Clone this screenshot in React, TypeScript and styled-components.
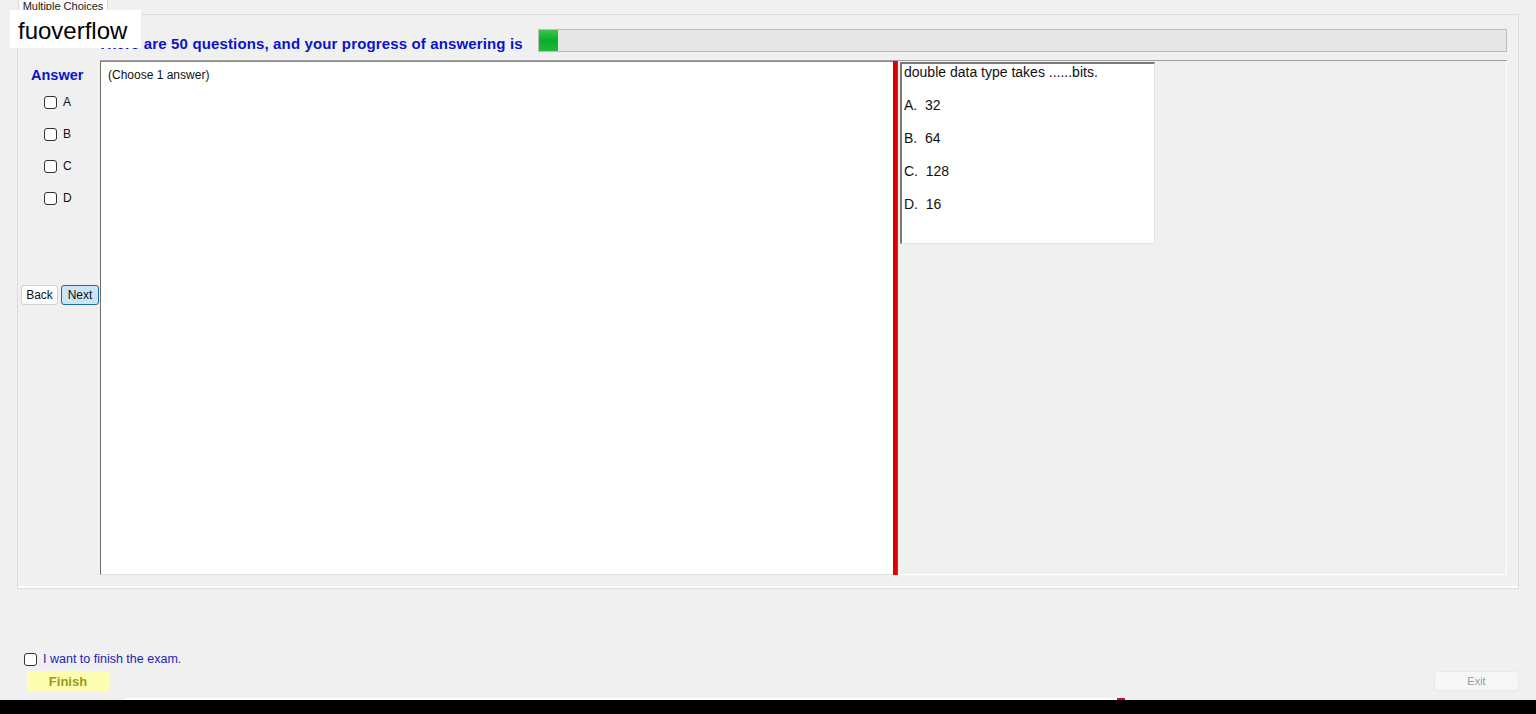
import styled, { createGlobalStyle } from "styled-components";

const GlobalStyle = createGlobalStyle`
  html, body {
    margin: 0;
    padding: 0;
    background: #f0f0f0;
    font-family: "Liberation Sans", Arial, sans-serif;
  }
  *, *::before, *::after {
    box-sizing: border-box;
  }
`;

const Screen = styled.div`
  position: relative;
  width: 1536px;
  height: 714px;
  overflow: hidden;
  display: flex;
  flex-direction: column;
  background: #f0f0f0;
`;

const Watermark = styled.div`
  position: absolute;
  left: 10px;
  top: 10px;
  width: 131px;
  height: 38px;
  padding-left: 8px;
  background: #ffffff;
  font-size: 24px;
  line-height: 42px;
  color: #000;
`;

const TabStrip = styled.div`
  height: 14px;
  padding-left: 18px;
  display: flex;
`;

const Tab = styled.div`
  width: 90px;
  height: 14px;
  border: 1px solid #d9d9d9;
  border-top: none;
  border-bottom: none;
  background: #fafafa;
  font-size: 11px;
  line-height: 12px;
  color: #222;
  text-align: center;
  overflow: hidden;
  white-space: nowrap;
`;

const TabPanel = styled.div`
  margin-left: 17px;
  width: 1502px;
  height: 575px;
  border: 1px solid #dcdcdc;
  box-shadow: inset 0 -2px 0 #ffffff;
  display: flex;
  flex-direction: column;
`;

const Header = styled.div`
  height: 45px;
  display: flex;
  align-items: flex-end;
  padding-left: 80px;
  padding-right: 11px;
`;

const HeaderText = styled.div`
  font-size: 15px;
  letter-spacing: 0.14px;
  font-weight: bold;
  color: #0a14c8;
  line-height: 16px;
  margin-bottom: 8px;
  white-space: nowrap;
`;

const Progress = styled.div`
  flex: 1;
  height: 23px;
  margin-left: 15px;
  margin-bottom: 8px;
  background: #e6e6e6;
  border: 1px solid #bcbcbc;
  display: flex;
`;

const ProgressFill = styled.div`
  height: 100%;
  background: linear-gradient(#3cc450, #06b025 50%, #22b83a);
`;

const Body = styled.div`
  height: 515px;
  display: flex;
`;

const LeftCol = styled.div`
  width: 82px;
  display: flex;
  flex-direction: column;
`;

const AnswerTitle = styled.div`
  margin: 7px 0 0 13px;
  font-size: 14.5px;
  font-weight: bold;
  color: #0a14c8;
  line-height: 16px;
`;

const Options = styled.div`
  margin-top: 3px;
  padding-left: 26px;
  display: flex;
  flex-direction: column;
`;

const OptionRow = styled.label`
  height: 32px;
  display: flex;
  align-items: center;
  gap: 6px;
  font-size: 12px;
  color: #111;
`;

const Check = styled.input.attrs({ type: "checkbox" })`
  appearance: none;
  margin: 0;
  width: 13px;
  height: 13px;
  border: 1px solid #333;
  border-radius: 3px;
  background: #fff;
`;

const NavRow = styled.div`
  margin-top: 71px;
  padding-left: 3px;
  display: flex;
  gap: 3px;
`;

const NavButton = styled.button<{ $primary?: boolean }>`
  height: 20px;
  width: ${(p) => (p.$primary ? "38px" : "37px")};
  padding: 0;
  font-family: "Liberation Sans", Arial, sans-serif;
  font-size: 12px;
  color: #111;
  border-radius: 3px;
  border: 1px solid ${(p) => (p.$primary ? "#1a6aa8" : "#d0d0d0")};
  background: ${(p) => (p.$primary ? "#cce4f7" : "#fdfdfd")};
`;

const Frame = styled.div`
  flex: 1;
  margin-right: 11px;
  display: flex;
  border-top: 1px solid #a0a0a0;
`;

const QuestionBox = styled.div`
  width: 793px;
  padding: 5px 7px;
  background: #fff;
  border-left: 1px solid #6d6d6d;
  border-top: 1px solid #8a8a8a;
  border-bottom: 1px solid #e0e0e0;
  font-size: 12px;
  color: #111;
  line-height: 16px;
`;

const Splitter = styled.div`
  width: 5px;
  background: #e00000;
  border-right: 1px solid #5a5a5a;
`;

const RightPane = styled.div`
  flex: 1;
  border-right: 1px solid #ffffff;
  border-bottom: 1px solid #ffffff;
  padding: 1px 0 0 2px;
`;

const ContentBox = styled.div`
  width: 255px;
  height: 182px;
  padding: 0 0 0 2px;
  background: #fff;
  border-left: 2px solid #7a7a7a;
  border-top: 2px solid #7a7a7a;
  border-right: 1px solid #e3e3e3;
  border-bottom: 1px solid #e3e3e3;
`;

const ContentLine = styled.div`
  font-size: 14px;
  line-height: 16px;
  height: 33px;
  color: #111;
  white-space: pre;
`;

const Bottom = styled.div`
  flex: 1;
  display: flex;
  flex-direction: column;
  padding-top: 62px;
`;

const FinishCheck = styled.label`
  margin-left: 24px;
  height: 16px;
  display: flex;
  align-items: center;
  gap: 6px;
  font-size: 12.5px;
  color: #2323b4;
`;

const ButtonRow = styled.div`
  margin-top: 4px;
  display: flex;
  justify-content: space-between;
  padding: 0 17px 0 27px;
`;

const FinishButton = styled.div`
  width: 82px;
  height: 20px;
  background: #fdfdb0;
  color: #9a9a1c;
  font-size: 13px;
  font-weight: bold;
  line-height: 21px;
  text-align: center;
`;

const ExitButton = styled.div`
  width: 85px;
  height: 20px;
  background: #f6f6f6;
  border: 1px solid #e9e9e9;
  border-radius: 3px;
  color: #9a9a9a;
  font-size: 11px;
  line-height: 19px;
  text-align: center;
`;

const Taskbar = styled.div`
  height: 16px;
  background: #000;
  display: flex;
  flex-direction: column;
`;

const TaskStrip = styled.div`
  height: 2px;
  background: #f0f0f0;
  display: flex;
  padding-left: 125px;
`;

const TaskSegment = styled.div<{ $color: string; $w: number }>`
  width: ${(p) => p.$w}px;
  background: ${(p) => p.$color};
`;

const options = ["A", "B", "C", "D"];
const answers = ["A.  32", "B.  64", "C.  128", "D.  16"];

export default function App() {
  const answered = 1;
  const total = 50;
  return (
    <>
      <GlobalStyle />
      <Screen>
        <TabStrip>
          <Tab>Multiple Choices</Tab>
        </TabStrip>
        <TabPanel>
          <Header>
            <HeaderText>There are 50 questions, and your progress of answering is</HeaderText>
            <Progress>
              <ProgressFill style={{ width: `${(answered / total) * 100}%` }} />
            </Progress>
          </Header>
          <Body>
            <LeftCol>
              <AnswerTitle>Answer</AnswerTitle>
              <Options>
                {options.map((o) => (
                  <OptionRow key={o}>
                    <Check />
                    {o}
                  </OptionRow>
                ))}
              </Options>
              <NavRow>
                <NavButton>Back</NavButton>
                <NavButton $primary>Next</NavButton>
              </NavRow>
            </LeftCol>
            <Frame>
              <QuestionBox>(Choose 1 answer)</QuestionBox>
              <Splitter />
              <RightPane>
                <ContentBox>
                  <ContentLine>double data type takes ......bits.</ContentLine>
                  {answers.map((a) => (
                    <ContentLine key={a}>{a}</ContentLine>
                  ))}
                </ContentBox>
              </RightPane>
            </Frame>
          </Body>
        </TabPanel>
        <Bottom>
          <FinishCheck>
            <Check />
            I want to finish the exam.
          </FinishCheck>
          <ButtonRow>
            <FinishButton>Finish</FinishButton>
            <ExitButton>Exit</ExitButton>
          </ButtonRow>
        </Bottom>
        <Taskbar>
          <TaskStrip>
            <TaskSegment $color="#ffffff" $w={992} />
            <TaskSegment $color="#c8102e" $w={8} />
          </TaskStrip>
        </Taskbar>
        <Watermark>fuoverflow</Watermark>
      </Screen>
    </>
  );
}
